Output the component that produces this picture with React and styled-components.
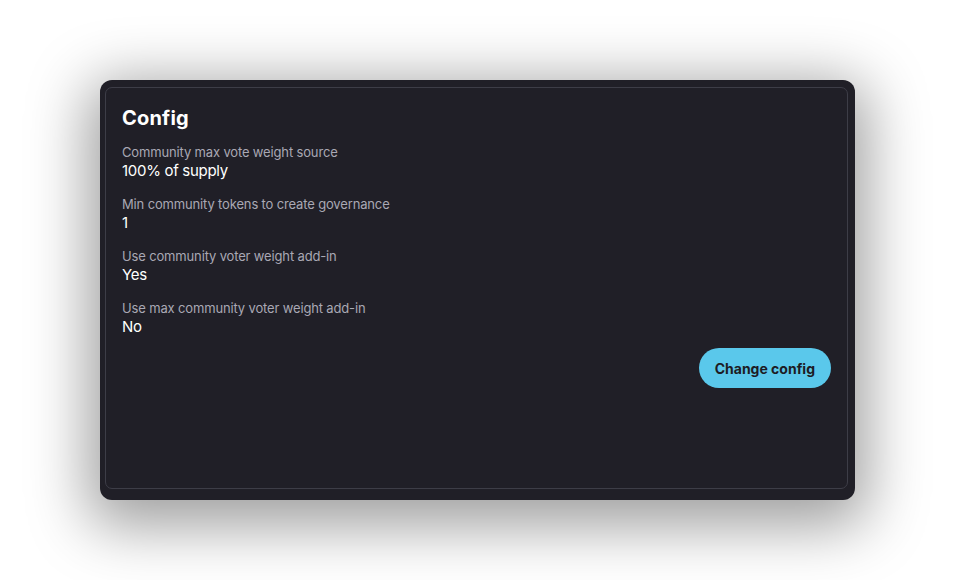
import React from "react";
import styled, { createGlobalStyle } from "styled-components";

const Global = createGlobalStyle`
  html, body { margin: 0; padding: 0; background: #ffffff; }
  body { font-family: Inter, "Noto Sans", sans-serif; -webkit-font-smoothing: antialiased; }
`;

const Page = styled.div`
  width: 955px;
  height: 580px;
  box-sizing: border-box;
  padding: 80px 100px;
`;

const Card = styled.div`
  height: 420px;
  box-sizing: border-box;
  background: #201f27;
  border-radius: 12px;
  padding: 7px 7px 11px 5px;
  box-shadow: 0 14px 60px 12px rgba(0, 0, 0, 0.38);
  display: flex;
`;

const Inner = styled.div`
  flex: 1;
  border: 1px solid #3d3d47;
  border-radius: 7px;
  padding: 16px;
  display: flex;
  flex-direction: column;
`;

const Title = styled.h2`
  margin: 0 0 11px;
  font-size: 20px;
  line-height: 28px;
  font-weight: 700;
  color: #ffffff;
  letter-spacing: 0.2px;
`;

const List = styled.div`
  display: flex;
  flex-direction: column;
  gap: 14px;
`;

const Item = styled.div`
  display: flex;
  flex-direction: column;
`;

const Label = styled.div`
  font-size: 13px;
  line-height: 18px;
  color: #a9a8b4;
  letter-spacing: -0.15px;
`;

const Value = styled.div`
  font-size: 15px;
  line-height: 20px;
  color: #ffffff;
  letter-spacing: -0.3px;
`;

const Actions = styled.div`
  display: flex;
  justify-content: flex-end;
  margin-top: 11px;
`;

const Button = styled.button`
  height: 40px;
  padding: 0 16px;
  border: none;
  border-radius: 20px;
  background: #5ac8eb;
  color: #1d1c24;
  font-family: Inter, "Noto Sans", sans-serif;
  font-size: 14px;
  font-weight: 700;
  cursor: pointer;
`;

const items = [
  ["Community max vote weight source", "100% of supply"],
  ["Min community tokens to create governance", "1"],
  ["Use community voter weight add-in", "Yes"],
  ["Use max community voter weight add-in", "No"],
];

export default function App() {
  return (
    <>
      <Global />
      <Page>
        <Card>
          <Inner>
            <Title>Config</Title>
            <List>
              {items.map(([l, v]) => (
                <Item key={l}>
                  <Label>{l}</Label>
                  <Value>{v}</Value>
                </Item>
              ))}
            </List>
            <Actions>
              <Button>Change config</Button>
            </Actions>
          </Inner>
        </Card>
      </Page>
    </>
  );
}
